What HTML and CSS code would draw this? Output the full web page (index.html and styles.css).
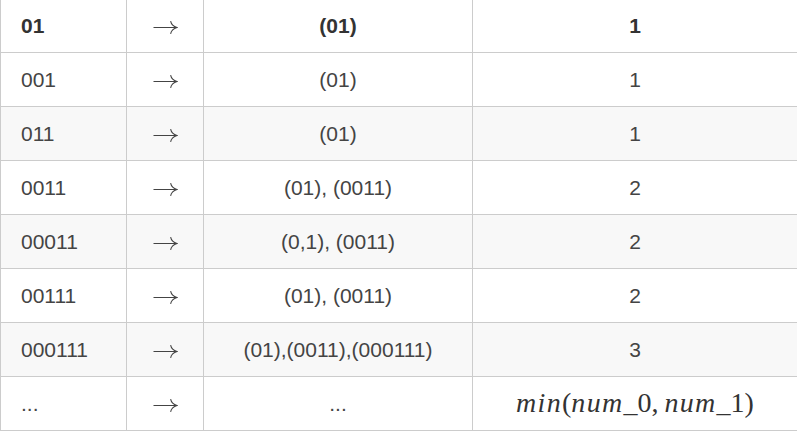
FILE: index.html
```html
<!DOCTYPE html>
<html>
<head>
<meta charset="utf-8">
<link rel="stylesheet" href="styles.css">
</head>
<body>
<table class="grid">
  <colgroup>
    <col class="c1"><col class="c2"><col class="c3"><col class="c4">
  </colgroup>
  <thead>
    <tr>
      <th class="first">01</th>
      <th><svg class="arrow" width="25" height="15" viewBox="0 0 25 15"><path d="M0.5 7.5H23.6M17.6 1.2Q18.6 6 24 7.5Q18.6 9 17.6 13.8"/></svg></th>
      <th>(01)</th>
      <th>1</th>
    </tr>
  </thead>
  <tbody>
    <tr>
      <td class="first">001</td>
      <td><svg class="arrow" width="25" height="15" viewBox="0 0 25 15"><path d="M0.5 7.5H23.6M17.6 1.2Q18.6 6 24 7.5Q18.6 9 17.6 13.8"/></svg></td>
      <td>(01)</td>
      <td>1</td>
    </tr>
    <tr class="alt">
      <td class="first">011</td>
      <td><svg class="arrow" width="25" height="15" viewBox="0 0 25 15"><path d="M0.5 7.5H23.6M17.6 1.2Q18.6 6 24 7.5Q18.6 9 17.6 13.8"/></svg></td>
      <td>(01)</td>
      <td>1</td>
    </tr>
    <tr>
      <td class="first">0011</td>
      <td><svg class="arrow" width="25" height="15" viewBox="0 0 25 15"><path d="M0.5 7.5H23.6M17.6 1.2Q18.6 6 24 7.5Q18.6 9 17.6 13.8"/></svg></td>
      <td>(01), (0011)</td>
      <td>2</td>
    </tr>
    <tr class="alt">
      <td class="first">00011</td>
      <td><svg class="arrow" width="25" height="15" viewBox="0 0 25 15"><path d="M0.5 7.5H23.6M17.6 1.2Q18.6 6 24 7.5Q18.6 9 17.6 13.8"/></svg></td>
      <td>(0,1), (0011)</td>
      <td>2</td>
    </tr>
    <tr>
      <td class="first">00111</td>
      <td><svg class="arrow" width="25" height="15" viewBox="0 0 25 15"><path d="M0.5 7.5H23.6M17.6 1.2Q18.6 6 24 7.5Q18.6 9 17.6 13.8"/></svg></td>
      <td>(01), (0011)</td>
      <td>2</td>
    </tr>
    <tr class="alt">
      <td class="first">000111</td>
      <td><svg class="arrow" width="25" height="15" viewBox="0 0 25 15"><path d="M0.5 7.5H23.6M17.6 1.2Q18.6 6 24 7.5Q18.6 9 17.6 13.8"/></svg></td>
      <td>(01),(0011),(000111)</td>
      <td>3</td>
    </tr>
    <tr>
      <td class="first">...</td>
      <td><svg class="arrow" width="25" height="15" viewBox="0 0 25 15"><path d="M0.5 7.5H23.6M17.6 1.2Q18.6 6 24 7.5Q18.6 9 17.6 13.8"/></svg></td>
      <td>...</td>
      <td><span class="math"><i>min</i>(<i>num</i>_0<span class="comma">,</span><i>num</i>_1)</span></td>
    </tr>
  </tbody>
</table>
</body>
</html>
```

FILE: styles.css
```css
html, body {
  margin: 0;
  padding: 0;
  background: #fff;
}

.grid {
  border-collapse: collapse;
  table-layout: fixed;
  width: 797px;
  margin-top: -2px;
  font-family: "Liberation Sans", Arial, sans-serif;
  font-size: 21px;
  color: #444;
}

.c1 { width: 126px; }
.c2 { width: 77px; }
.c3 { width: 269px; }
.c4 { width: 325px; }

.grid tr {
  height: 54px;
}

.grid th,
.grid td {
  border: 1px solid #ccc;
  padding: 0 20px;
  text-align: center;
  vertical-align: middle;
  white-space: nowrap;
}

.grid th {
  font-weight: bold;
  color: #333;
}

.grid .first {
  text-align: left;
}

.grid tr.alt td {
  background: #f8f8f8;
}

.arrow {
  display: inline-block;
  vertical-align: middle;
  position: relative;
  top: 1px;
  fill: none;
  stroke: #444;
  stroke-width: 1.1;
}

.math {
  font-family: "Liberation Serif", "Times New Roman", serif;
  font-size: 28px;
  color: #333;
  position: relative;
  top: -1px;
}

.math i {
  font-style: italic;
  letter-spacing: 1.3px;
}

.math .comma {
  margin-right: 6px;
}
```
